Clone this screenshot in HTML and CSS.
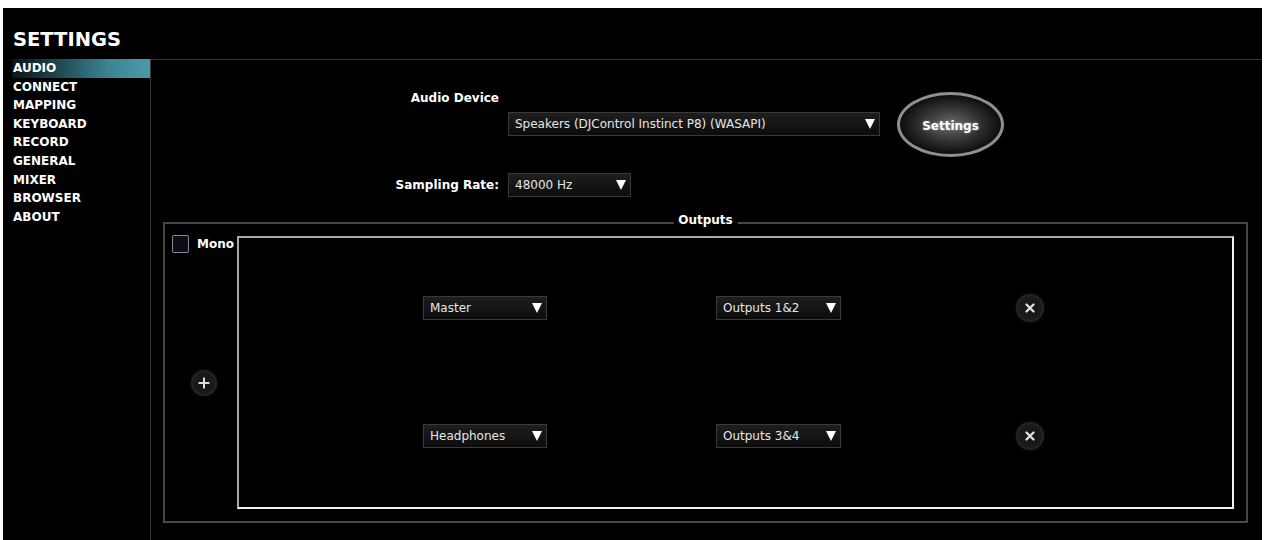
FILE: index.html
```html
<!DOCTYPE html>
<html lang="en">
<head>
    <meta charset="UTF-8">
    <meta name="viewport" content="width=device-width, initial-scale=1.0">
    <title>Settings - Audio</title>
    <link rel="stylesheet" href="styles.css">
</head>
<body>
    <div class="app">
        <aside class="sidebar">
            <h1 class="title">SETTINGS</h1>
            <ul class="nav">
                <li class="nav-item active">AUDIO</li>
                <li class="nav-item">CONNECT</li>
                <li class="nav-item">MAPPING</li>
                <li class="nav-item">KEYBOARD</li>
                <li class="nav-item">RECORD</li>
                <li class="nav-item">GENERAL</li>
                <li class="nav-item">MIXER</li>
                <li class="nav-item">BROWSER</li>
                <li class="nav-item">ABOUT</li>
            </ul>
        </aside>

        <main class="main">
            <div class="device-panel">
                <div class="field-label device-label">Audio Device</div>
                <div class="device-row">
                    <div class="select select-device">
                        <span>Speakers (DJControl Instinct P8) (WASAPI)</span>
                        <span class="arrow"></span>
                    </div>
                    <button type="button" class="settings-btn">Settings</button>
                </div>

                <div class="field-label rate-label">Sampling Rate:</div>
                <div class="select select-rate">
                    <span>48000 Hz</span>
                    <span class="arrow"></span>
                </div>
            </div>

            <section class="outputs">
                <div class="outputs-legend">Outputs</div>

                <div class="outputs-side">
                    <label class="mono"><span class="checkbox"></span>Mono</label>
                    <button type="button" class="round-btn add-btn">
                        <svg width="14" height="14" viewBox="0 0 14 14">
                            <path d="M7 1.5 V12.5 M1.5 7 H12.5" stroke="#dcdcdc" stroke-width="2" fill="none"/>
                        </svg>
                    </button>
                </div>

                <div class="outputs-list">
                    <div class="output-row">
                        <div class="select select-route">
                            <span>Master</span>
                            <span class="arrow"></span>
                        </div>
                        <div class="select select-out">
                            <span>Outputs 1&amp;2</span>
                            <span class="arrow"></span>
                        </div>
                        <button type="button" class="round-btn remove-btn">
                            <svg width="14" height="14" viewBox="0 0 14 14">
                                <path d="M3.5 3.5 L10.5 10.5 M10.5 3.5 L3.5 10.5" stroke="#dedede" stroke-width="2.4" stroke-linecap="round" fill="none"/>
                            </svg>
                        </button>
                    </div>
                    <div class="output-row">
                        <div class="select select-route">
                            <span>Headphones</span>
                            <span class="arrow"></span>
                        </div>
                        <div class="select select-out">
                            <span>Outputs 3&amp;4</span>
                            <span class="arrow"></span>
                        </div>
                        <button type="button" class="round-btn remove-btn">
                            <svg width="14" height="14" viewBox="0 0 14 14">
                                <path d="M3.5 3.5 L10.5 10.5 M10.5 3.5 L3.5 10.5" stroke="#dedede" stroke-width="2.4" stroke-linecap="round" fill="none"/>
                            </svg>
                        </button>
                    </div>
                </div>
            </section>
        </main>
    </div>
</body>
</html>
```

FILE: styles.css
```css
html {
    background-color: white;
}
body {
    margin: 8px 3px 0;
    background-color: #000;
    color: #fff;
    font-family: "DejaVu Sans", Verdana, sans-serif;
    font-size: 12px;
}
.app {
    display: flex;
    min-height: calc(100vh - 8px);
}
.sidebar {
    width: 138px;
    padding-left: 9px;
}
.title {
    margin: 20px 0 8px;
    padding-left: 1px;
    font-size: 19.5px;
    line-height: 23px;
    font-weight: bold;
}
.nav {
    list-style: none;
    margin: 0;
    padding: 0;
}
.nav-item {
    padding-left: 1px;
    font-weight: bold;
    line-height: 18.6px;
}
.nav-item.active {
    background: linear-gradient(to right, #0a1418 0%, #1f4a54 35%, #3d8494 70%, #4a9aab 100%);
}
.main {
    flex: 1;
    display: flex;
    flex-direction: column;
    margin-top: 51px;
    border-top: 1px solid #363636;
    border-left: 1px solid #363636;
}
.device-panel {
    display: grid;
    grid-template-columns: 348px auto;
    column-gap: 9px;
    justify-content: start;
    padding-top: 31px;
}
.field-label {
    text-align: right;
    font-weight: bold;
    line-height: 14px;
}
.device-label {
    grid-column: 1;
    grid-row: 1;
}
.device-row {
    grid-column: 2;
    grid-row: 2;
    display: flex;
    align-items: center;
    margin-top: 7px;
}
.rate-label {
    grid-column: 1;
    grid-row: 3;
    align-self: center;
    margin-top: 37px;
}
.select-rate {
    grid-column: 2;
    grid-row: 3;
    margin-top: 37px;
}
.select {
    display: flex;
    align-items: center;
    justify-content: space-between;
    box-sizing: border-box;
    height: 24px;
    padding: 0 4px 0 6px;
    border: 1px solid #3a3a3a;
    background: linear-gradient(#1e1e1e, #0c0c0c);
    color: #e6e6e6;
}
.select-device {
    width: 372px;
}
.select-rate {
    width: 123px;
}
.select-route {
    width: 124px;
}
.select-out {
    width: 125px;
}
.arrow {
    width: 0;
    height: 0;
    border-left: 5px solid transparent;
    border-right: 5px solid transparent;
    border-top: 10px solid #fff;
}
.settings-btn {
    width: 107px;
    height: 65px;
    margin: -20px 0 -21px 17px;
    border: 3px solid #8f8f8f;
    border-radius: 50%;
    background: radial-gradient(ellipse at center, #6a6a6a 0%, #333 40%, #0c0c0c 72%, #000 100%);
    color: #fff;
    font-family: inherit;
    font-size: 12px;
    font-weight: bold;
    text-shadow: 0 0 3px rgba(255,255,255,0.4);
    padding: 3px 0 0;
}
.outputs {
    position: relative;
    display: flex;
    margin: 25px 14px 17px 12px;
    padding: 12px 12px 12px 7px;
    border: 2px solid #474747;
}
.outputs-legend {
    position: absolute;
    top: -11px;
    left: 50%;
    transform: translateX(-50%);
    padding: 0 5px;
    background-color: #000;
    font-weight: bold;
    line-height: 14px;
}
.outputs-side {
    flex: none;
    width: 65px;
    display: flex;
    flex-direction: column;
    align-items: flex-start;
}
.mono {
    display: flex;
    align-items: center;
    gap: 8px;
    height: 18px;
    margin-top: -1px;
    font-weight: bold;
}
.checkbox {
    box-sizing: border-box;
    width: 17px;
    height: 18px;
    border: 1px solid #8a8a8a;
    border-radius: 2px;
    background-color: #0d0d1a;
}
.round-btn {
    display: flex;
    align-items: center;
    justify-content: center;
    padding: 0;
    border: none;
    border-radius: 50%;
    background: radial-gradient(circle, #141414 0%, #1a1a1a 55%, #2c2c2c 75%, #1a1a1a 88%, rgba(0,0,0,0) 100%);
    box-shadow: 0 0 4px #151515;
}
.add-btn {
    width: 26px;
    height: 26px;
    margin: 117px 0 0 19px;
}
.remove-btn {
    width: 28px;
    height: 28px;
}
.outputs-list {
    flex: 1;
    display: flex;
    flex-direction: column;
    gap: 100px;
    padding: 56px 0 57px 184px;
    border: 2px solid;
    border-color: #a8a8a8 #f2f2f2 #f2f2f2 #a8a8a8;
}
.output-row {
    display: grid;
    grid-template-columns: 293px 300px 28px;
    align-items: center;
}
```
